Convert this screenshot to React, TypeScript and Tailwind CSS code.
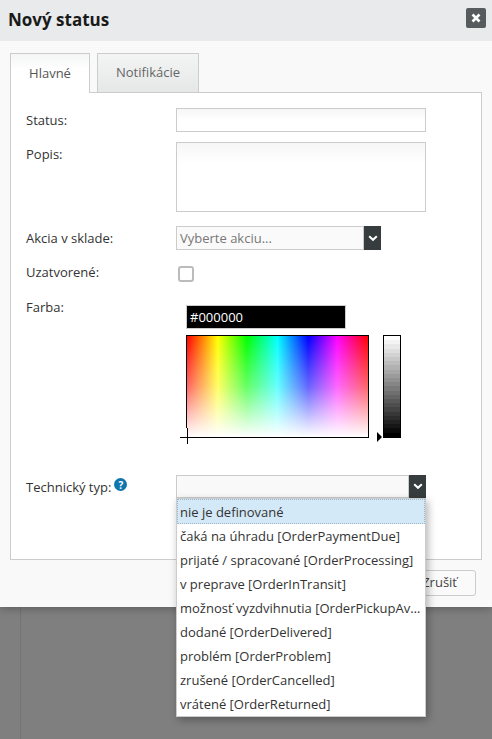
const items = [
  "čaká na úhradu [OrderPaymentDue]",
  "prijaté / spracované [OrderProcessing]",
  "v preprave [OrderInTransit]",
  "možnosť vyzdvihnutia [OrderPickupAvailable]",
  "dodané [OrderDelivered]",
  "problém [OrderProblem]",
  "zrušené [OrderCancelled]",
  "vrátené [OrderReturned]",
];

const bands = Array.from({ length: 24 }, (_, i) => {
  const v = Math.round(255 - (i * 255) / 23);
  return `rgb(${v},${v},${v})`;
});

function Chevron() {
  return (
    <svg width="10" height="7" viewBox="0 0 10 7" className="block">
      <path d="M1.2 1.2 L5 4.8 L8.8 1.2" fill="none" stroke="#fff" strokeWidth="2" />
    </svg>
  );
}

function Row({ label, height, children }: { label: React.ReactNode; height: string; children?: React.ReactNode }) {
  return (
    <div className={`flex ${height}`}>
      <div className="w-[150px] shrink-0 text-[13px] leading-[18px] text-[#333]">{label}</div>
      <div className="flex-1 min-w-0">{children}</div>
    </div>
  );
}

export default function App() {
  return (
    <div className="relative w-[492px] h-[739px] overflow-hidden bg-[#7f7f7f] font-['Open_Sans',sans-serif]">
      <div className="absolute left-[20px] top-[607px] bottom-0 w-px bg-[#747474]" />
      <div className="relative h-[607px] bg-[#f9f9f9] shadow-[0_2px_8px_rgba(0,0,0,0.25)]">
        <div className="flex h-[41px] items-start justify-between bg-[#e9eaeb] pl-2 pr-[6px] pt-2">
          <div className="text-[17px] leading-[24px] font-bold text-[#1a1a1a]">Nový status</div>
          <div className="flex h-5 w-5 items-center justify-center rounded-[2px] bg-[#565c5e]">
            <svg width="10" height="10" viewBox="0 0 10 10">
              <path d="M1.5 1.5 L8.5 8.5 M8.5 1.5 L1.5 8.5" stroke="#fff" strokeWidth="2.6" />
            </svg>
          </div>
        </div>

        <div className="px-[10px] pt-3">
          <div className="relative z-10 flex h-10 items-start gap-[7px] text-[13px]">
            <div className="flex h-[40px] w-[80px] items-center justify-center border border-b-0 border-[#ccc] bg-[linear-gradient(#f4f5f5,#ffffff_40%)] text-[#555]">Hlavné</div>
            <div className="flex h-[39px] w-[102px] items-center justify-center border border-b-0 border-[#ccc] bg-[linear-gradient(#f3f4f4,#e6e8e8)] text-[#666]">Notifikácie</div>
          </div>
          <div className="-mt-px h-[468px] border border-[#ccc] bg-white pl-[15px] pt-[15px]">
            <Row label={<div className="pt-[3px]">Status:</div>} height="h-[34px]">
              <div className="h-6 w-[250px] border border-[#ccc] bg-[linear-gradient(#f6f6f6,#ffffff_50%)]" />
            </Row>
            <Row label={<div className="pt-[3px]">Popis:</div>} height="h-[84px]">
              <div className="h-[70px] w-[250px] border border-[#ccc] bg-[linear-gradient(#f6f6f6,#ffffff_30%)]" />
            </Row>
            <Row label={<div className="pt-[3px]">Akcia v sklade:</div>} height="h-[37px]">
              <div className="flex h-6 w-[205px]">
                <div className="flex-1 border border-[#ccc] bg-[#fafafa] pl-[3px] text-[13px] leading-[22px] text-[#777]">Vyberte akciu...</div>
                <div className="flex w-[17px] items-center justify-center bg-[#373d3f]"><Chevron /></div>
              </div>
            </Row>
            <Row label="Uzatvorené:" height="h-[35px]">
              <div className="mt-[3px] ml-[2px] h-4 w-4 rounded-[3px] border-2 border-[#bbb] bg-white" />
            </Row>
            <Row label="Farba:" height="h-[177px]">
              <div className="ml-[10px] mt-[7px]">
                <div className="h-6 w-[160px] border border-[#ccc] bg-black pl-[3px] text-[13px] leading-[22px] text-white">#000000</div>
                <div className="mt-[6px] flex items-start">
                  <div className="relative h-[103px] w-[183px] border border-black bg-[linear-gradient(to_bottom,rgba(255,255,255,0),rgba(255,255,255,0.4)_50%,#ffffff),linear-gradient(to_right,#ff0000,#ffff00_17%,#00ff00_33%,#00ffff_50%,#0000ff_67%,#ff00ff_83%,#ff0000)]">
                    <div className="absolute -left-px top-[92px] h-[9px] w-px bg-white" />
                    <div className="absolute -left-[7px] top-[101px] h-px w-[15px] bg-black" />
                    <div className="absolute left-0 top-[92px] h-4 w-px bg-black" />
                  </div>
                  <div className="relative ml-[14px] flex h-[103px] w-[18px] flex-col border border-black">
                    {bands.map((c) => (
                      <div key={c} className="flex-1" style={{ backgroundColor: c }} />
                    ))}
                    <div className="absolute -left-[7px] top-[96px] h-0 w-0 border-y-[5px] border-l-[5px] border-y-transparent border-l-black" />
                  </div>
                </div>
              </div>
            </Row>
            <Row label={
              <div className="flex items-start gap-[3px] pt-[3px]">
                <span>Technický typ:</span>
                <span className="flex h-[13px] w-[13px] items-center justify-center rounded-full bg-[#0f76ad] text-[10px] font-bold leading-none text-white">?</span>
              </div>
            } height="h-6">
              <div className="flex h-[23px] w-[250px]">
                <div className="flex-1 border border-[#ccc] bg-[#f9f9f9]" />
                <div className="flex w-[17px] items-center justify-center bg-[#373d3f]"><Chevron /></div>
              </div>
            </Row>
          </div>
        </div>

        <div className="absolute left-[400px] top-[570px] flex h-[26px] w-[76px] items-center justify-end rounded-[3px] border border-[#ccc] bg-[#fafafa] pr-[18px] text-[13px] text-[#444]">Zrušiť</div>
      </div>

      <div className="absolute left-[176px] top-[498px] z-20 w-[250px] border border-[#ccc] bg-white shadow-[2px_3px_8px_rgba(0,0,0,0.3)] text-[13px] text-[#333]">
        <div className="h-[25px] border border-dotted border-[#9bb6cf] bg-[#d4e9f7] pl-[2px] leading-[25px]">nie je definované</div>
        {items.map((t) => (
          <div key={t} className="h-6 truncate pl-[3px] pr-[3px] leading-[24px]">{t}</div>
        ))}
      </div>
    </div>
  );
}
